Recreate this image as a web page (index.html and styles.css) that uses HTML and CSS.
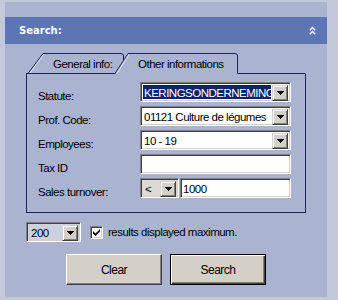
FILE: index.html
```html
<!DOCTYPE html>
<html lang="en">

<head>
  <meta charset="UTF-8" />
  <meta name="viewport" content="width=device-width, initial-scale=1.0" />
  <title>Search</title>
  <link rel="stylesheet" href="styles.css">
</head>

<body>
  <div class="frame">
    <div class="panel">
      <div class="panel-head">
        <span class="panel-title">Search:</span>
        <svg class="collapse" width="7" height="9" viewBox="0 0 7 9">
          <path d="M0.8 4.2 L3.5 1.5 L6.2 4.2 M0.8 8.2 L3.5 5.5 L6.2 8.2" fill="none" stroke="#fff" stroke-width="1.5" />
        </svg>
      </div>

      <div class="tabs">
        <svg class="tab-strip" width="280" height="21" viewBox="0 0 280 21">
          <!-- back tab -->
          <path d="M2 20.5 L17 0.5 L95 0.5 Q97.5 0.5 97.5 3 L97.5 20.5 Z" fill="#aab4d0" stroke="#1b2553" />
          <path d="M4 20 L17.6 1.5" stroke="#e6eaf4" />
          <!-- active tab -->
          <path d="M89 21 L102 0.5 L209 0.5 Q211.5 0.5 211.5 3 L211.5 21 Z" fill="#aab4d0" />
          <path d="M89 20.5 L102 0.5 L209 0.5 Q211.5 0.5 211.5 3 L211.5 20.5 L279.5 20.5" fill="none" stroke="#1b2553" />
          <path d="M91 20.5 L103 1.5" stroke="#e6eaf4" />
          <path d="M0 20.5 L89 20.5" stroke="#1b2553" />
          <text class="tab-label" x="27" y="15">General info:</text>
          <text class="tab-label" x="112" y="15">Other informations</text>
        </svg>

        <div class="tab-box">
          <span class="label">Statute:</span>
          <div class="combo">
            <span class="combo-text selected">KERINGSONDERNEMING</span>
            <span class="combo-btn"><svg width="7" height="4" viewBox="0 0 7 4"><path d="M0 0h7L3.5 4z" /></svg></span>
          </div>

          <span class="label">Prof. Code:</span>
          <div class="combo">
            <span class="combo-text">01121 Culture de légumes</span>
            <span class="combo-btn"><svg width="7" height="4" viewBox="0 0 7 4"><path d="M0 0h7L3.5 4z" /></svg></span>
          </div>

          <span class="label">Employees:</span>
          <div class="combo">
            <span class="combo-text">10 - 19</span>
            <span class="combo-btn"><svg width="7" height="4" viewBox="0 0 7 4"><path d="M0 0h7L3.5 4z" /></svg></span>
          </div>

          <span class="label">Tax ID</span>
          <div class="field"></div>

          <span class="label">Sales turnover:</span>
          <div class="turnover">
            <div class="combo combo-op">
              <span class="combo-text">&lt;</span>
              <span class="combo-btn"><svg width="7" height="4" viewBox="0 0 7 4"><path d="M0 0h7L3.5 4z" /></svg></span>
            </div>
            <div class="field field-amount">1000</div>
          </div>
        </div>
      </div>

      <div class="limit-row">
        <div class="combo combo-limit">
          <span class="combo-text">200</span>
          <span class="combo-btn"><svg width="7" height="4" viewBox="0 0 7 4"><path d="M0 0h7L3.5 4z" /></svg></span>
        </div>
        <span class="checkbox">
          <svg width="7" height="7" viewBox="0 0 7 7"><path d="M0 2 L2.5 4.5 L7 0 L7 2.5 L2.5 7 L0 4.5 Z" /></svg>
        </span>
        <span class="limit-text">results displayed maximum.</span>
      </div>

      <div class="buttons">
        <div class="btn">Clear</div>
        <div class="btn btn-default">Search</div>
      </div>
    </div>
  </div>
</body>

</html>
```

FILE: styles.css
```css
body {
  margin: 0;
  background-color: #c3c9da;
  font-family: "Liberation Sans", Arial, sans-serif;
  font-size: 11.5px;
  letter-spacing: -0.5px;
  color: #000;
}

.frame {
  width: 338px;
  height: 300px;
  padding: 2px 11px 0 5px;
  box-sizing: border-box;
}

.panel {
  height: 295px;
  background-color: #aab4d0;
  padding-top: 15px;
  box-sizing: border-box;
}

.panel-head {
  display: flex;
  align-items: center;
  justify-content: space-between;
  height: 27px;
  padding: 0 11px 0 14px;
  background-color: #5b76b3;
}

.panel-title {
  font-family: "DejaVu Sans", Verdana, sans-serif;
  font-weight: bold;
  font-size: 10px;
  letter-spacing: 0;
  color: #fff;
}

.collapse {
  display: block;
}

.tabs {
  margin: 9px 0 0 21px;
  width: 280px;
}

.tab-strip {
  display: block;
}

.tab-label {
  font-family: "Liberation Sans", Arial, sans-serif;
  font-size: 11.5px;
  letter-spacing: -0.5px;
  fill: #000;
}

.tab-box {
  display: grid;
  grid-template-columns: 102px 151px;
  grid-auto-rows: 20px;
  row-gap: 4px;
  padding: 8px 14px 14px 11px;
  border: 1px solid #1b2553;
  border-top: none;
}

.label {
  align-self: end;
  line-height: 12px;
  white-space: nowrap;
}

/* classic sunken box */
.combo,
.field,
.checkbox {
  box-sizing: border-box;
  border: 1px solid;
  border-color: #808080 #fff #fff #808080;
  box-shadow: inset 1px 1px #404040, inset -1px -1px #d4d0c8;
  background-color: #fff;
}

.combo {
  display: flex;
  height: 20px;
  padding: 2px;
}

.combo-text {
  flex: 1;
  min-width: 0;
  padding-left: 1px;
  line-height: 16px;
  white-space: nowrap;
  overflow: hidden;
}

.combo-text.selected {
  background-color: #0a246a;
  color: #fff;
  margin-right: 1px;
}

.combo-btn {
  display: flex;
  align-items: center;
  justify-content: center;
  width: 16px;
  height: 16px;
  box-sizing: border-box;
  background-color: #d4d0c8;
  border: 1px solid;
  border-color: #d4d0c8 #404040 #404040 #d4d0c8;
  box-shadow: inset 1px 1px #fff, inset -1px -1px #808080;
}

.combo-btn svg {
  display: block;
  shape-rendering: crispEdges;
}

.field {
  height: 20px;
  padding: 2px 3px;
  line-height: 16px;
}

.turnover {
  display: flex;
  gap: 1px;
}

.combo-op {
  width: 39px;
  background-color: #dcdad6;
}

.combo-op .combo-text {
  padding-left: 2px;
}

.field-amount {
  width: 111px;
  padding-left: 2px;
}

.limit-row {
  display: flex;
  align-items: center;
  margin: 9px 0 0 21px;
}

.combo-limit {
  width: 55px;
  background-color: #cdd1de;
}

.combo-limit .combo-text {
  padding-left: 2px;
}

.checkbox {
  display: flex;
  align-items: center;
  justify-content: center;
  width: 13px;
  height: 13px;
  margin-left: 9px;
}

.limit-text {
  margin-left: 5px;
}

.buttons {
  display: flex;
  gap: 8px;
  margin: 12px 0 0 61px;
}

.btn {
  width: 96px;
  height: 31px;
  box-sizing: border-box;
  display: flex;
  align-items: center;
  justify-content: center;
  background-color: #d4d0c8;
  border: 1px solid;
  border-color: #fff #404040 #404040 #fff;
  box-shadow: inset -1px -1px #808080;
  font-size: 12px;
}

.btn-default {
  border: 1px solid #000;
  box-shadow: inset 1px 1px #fff, inset -1px -1px #404040, inset -2px -2px #808080;
}
```
